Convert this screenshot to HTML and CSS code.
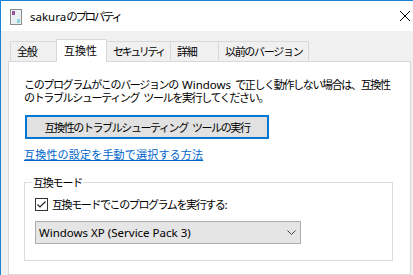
FILE: index.html
```html
<!DOCTYPE html>
<html lang="ja">
<head>
<title>sakuraのプロパティ</title>
<meta charset="utf-8">
<link rel="stylesheet" href="styles.css">
</head>
<body>

<div class="window">
  <div class="titlebar">
    <svg class="app-icon" width="12" height="16" viewBox="0 0 12 16">
      <rect x="0.5" y="0.5" width="11" height="15" fill="#f4f4f4" stroke="#8a8a8a"/>
      <rect x="1" y="1" width="10" height="14" fill="#eceff1"/>
      <rect x="2" y="2" width="3" height="4" fill="#9a4f9e"/>
      <rect x="7" y="10" width="3" height="4" fill="#8fd8e0"/>
    </svg>
    <span class="title"><span class="latin">sakura</span>のプロパティ</span>
    <svg class="close" width="10" height="10" viewBox="0 0 10 10">
      <path d="M0 0 L10 10 M10 0 L0 10" stroke="#000" stroke-width="1"/>
    </svg>
  </div>

  <div class="client">
    <ul class="tabs">
      <li>全般</li>
      <li class="active">互換性</li>
      <li class="narrow">セキュリティ</li>
      <li>詳細</li>
      <li>以前のバージョン</li>
    </ul>

    <div class="panel">
      <p class="intro">このプログラムがこのバージョンの <span class="latin">Windows</span> で正しく動作しない場合は、互換性<br>のトラブルシューティング ツールを実行してください。</p>

      <button class="trouble">互換性のトラブルシューティング ツールの実行</button>

      <a class="manual" href="#">互換性の設定を手動で選択する方法</a>

      <fieldset class="group">
        <legend>互換モード</legend>
        <label class="check">
          <span class="box">
            <svg width="11" height="11" viewBox="0 0 11 11">
              <path d="M1.5 5.5 L4 8 L9.5 2.5" fill="none" stroke="#222" stroke-width="1.2"/>
            </svg>
          </span>
          <span>互換モードでこのプログラムを実行する:</span>
        </label>
        <div class="select">
          <span class="latin">Windows XP (Service Pack 3)</span>
          <svg width="9" height="5" viewBox="0 0 9 5">
            <path d="M0.5 0.5 L4.5 4.5 L8.5 0.5" fill="none" stroke="#444" stroke-width="1"/>
          </svg>
        </div>
      </fieldset>
    </div>
  </div>
</div>

</body>
</html>
```

FILE: styles.css
```css
* {
  box-sizing: border-box;
}

html, body {
  margin: 0;
  height: 100%;
  overflow: hidden;
}

body {
  font-family: "Noto Sans CJK JP", "Noto Sans", sans-serif;
  font-size: 11px;
  color: #000;
}

/* Latin runs keep their natural spacing */
.latin {
  font-family: "Noto Sans", sans-serif;
  letter-spacing: 0;
}

/* Window frame */
.window {
  height: 275px;
  border-top: 1px solid #1883d7;
  border-left: 1px solid #1883d7;
  background: #f0f0f0;
  display: flex;
  flex-direction: column;
}

.titlebar {
  height: 30px;
  background: #fff;
  display: flex;
  align-items: center;
  padding-left: 9px;
  padding-right: 3px;
}

.app-icon {
  flex: none;
  margin-top: 1px;
}

.title {
  margin-left: 8px;
  font-size: 11.5px;
  letter-spacing: -2.3px;
}

.close {
  margin-left: auto;
}

/* Tabs and the page below them */
.client {
  flex: 1;
  padding: 8px 0 0 7px;
  display: flex;
  flex-direction: column;
}

.tabs {
  list-style: none;
  margin: 0 0 0 2px;
  padding: 0;
  display: flex;
  align-items: flex-end;
  height: 22px;
}

.tabs li {
  height: 20px;
  line-height: 19px;
  min-width: 48px;
  padding: 0 6px;
  letter-spacing: -1.3px;
  border: 1px solid #d9d9d9;
  border-bottom: none;
  border-left: none;
  background: #f0f0f0;
}

.tabs li:first-child {
  border-left: 1px solid #d9d9d9;
  min-width: 47px;
}

.tabs li.narrow {
  letter-spacing: -2.4px;
}

.tabs li.active {
  position: relative;
  z-index: 1;
  height: 23px;
  min-width: 51px;
  margin-bottom: -1px;
  margin-left: -1px;
  line-height: 21px;
  padding: 0 7px;
  letter-spacing: 0;
  background: #fff;
  border-left: 1px solid #d9d9d9;
}

.panel {
  flex: 1;
  width: 403px;
  background: #fff;
  border: 1px solid #d9d9d9;
  padding: 16px 15px 0 15px;
}

.intro {
  margin: 0;
  line-height: 13px;
  letter-spacing: -1.35px;
  word-spacing: 3px;
  white-space: nowrap;
}

.intro .latin {
  line-height: 0;
  font-size: 11.5px;
}

.trouble {
  display: block;
  margin: 11px 0 0 1px;
  width: 244px;
  height: 24px;
  padding: 0;
  border: 2px solid #0078d7;
  background: #e1e1e1;
  font-family: inherit;
  font-size: 11px;
  letter-spacing: -1.4px;
  word-spacing: 3px;
  color: #000;
}

.manual {
  display: inline-block;
  margin-top: 9px;
  line-height: 13px;
  letter-spacing: 0.2px;
  color: #0066cc;
}

/* Compatibility mode group */
.group {
  margin: 14px 0 0 0;
  width: 369px;
  border: 1px solid #dcdcdc;
  padding: 2px 10px 16px 10px;
}

.group legend {
  padding: 0 1px;
  margin-left: -3px;
  line-height: 13px;
  letter-spacing: -1.2px;
}

.check {
  display: flex;
  align-items: center;
  gap: 4px;
  height: 14px;
  margin-top: 6px;
  letter-spacing: -1.4px;
}

.box {
  width: 13px;
  height: 13px;
  border: 1px solid #333;
  background: #fff;
  display: flex;
  align-items: center;
  justify-content: center;
}

.select {
  margin-top: 10px;
  width: 266px;
  height: 23px;
  border: 1px solid #adadad;
  background: #e5e5e5;
  display: flex;
  align-items: center;
  justify-content: space-between;
  padding: 0 4px 0 3px;
  font-size: 11.5px;
}
```
